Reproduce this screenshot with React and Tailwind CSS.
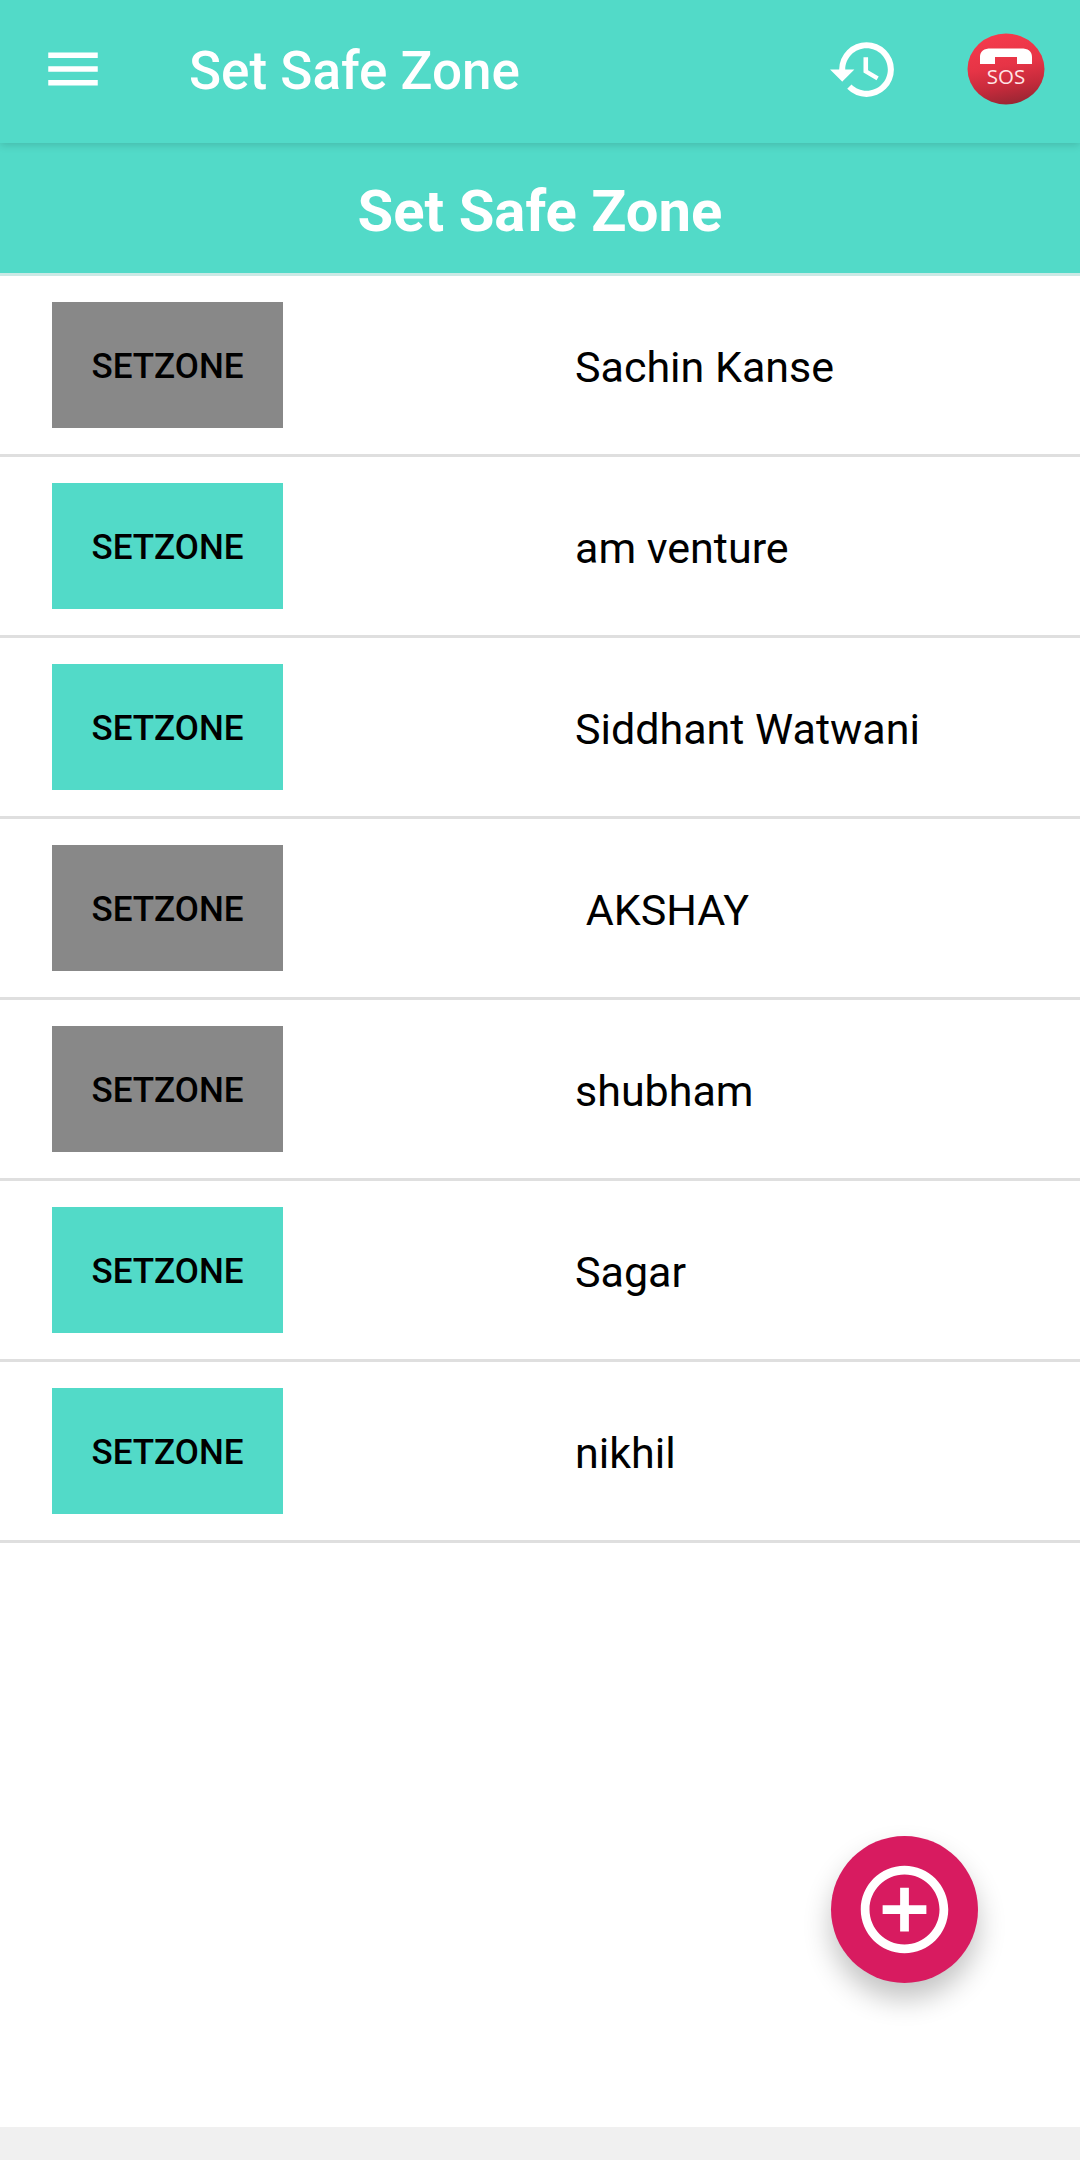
import React from 'react';
import { MdMenu, MdHistory, MdAddCircleOutline } from 'react-icons/md';

const contacts = [
  { id: 1, name: 'Sachin Kanse', active: false },
  { id: 2, name: 'am venture', active: true },
  { id: 3, name: 'Siddhant Watwani', active: true },
  { id: 4, name: ' AKSHAY', active: false },
  { id: 5, name: 'shubham', active: false },
  { id: 6, name: 'Sagar', active: true },
  { id: 7, name: 'nikhil', active: true }
];

const SosIcon = () => (
  <svg width="78" height="72" viewBox="0 0 78 72">
    <defs>
      <linearGradient id="sosFill" x1="0.4" y1="0" x2="0.6" y2="1">
        <stop offset="0" stopColor="#f53a4c" />
        <stop offset="0.45" stopColor="#e63446" />
        <stop offset="0.75" stopColor="#c42a3b" />
        <stop offset="1" stopColor="#982633" />
      </linearGradient>
    </defs>
    <ellipse cx="39" cy="36" rx="38.5" ry="35.5" fill="url(#sosFill)" />
    <path
      d="M13 31V24C13 18 17 15.5 24 15.5H54C61 15.5 65 18 65 24V31H50V24H28V31Z"
      fill="#fff"
    />
    <text
      x="39"
      y="51"
      textAnchor="middle"
      fontSize="20.5"
      fontFamily="'Open Sans', sans-serif"
      fill="#ffe4e6"
    >
      SOS
    </text>
  </svg>
);

const ContactRow = ({ contact }) => (
  <li className="flex h-[181px] items-center border-b-3 border-[#dfdfdf] pl-[52px]">
    <button
      className={`h-[126px] w-[231px] pt-[4px] text-[35px] font-medium text-black ${
        contact.active ? 'bg-[#52dac8]' : 'bg-[#888888]'
      }`}
    >
      SETZONE
    </button>
    <span className="ml-[292px] pt-[4px] text-[43px] whitespace-pre text-black">{contact.name}</span>
  </li>
);

const App = () => {
  return (
    <div className="relative flex h-[2160px] w-[1080px] flex-col bg-white font-[Roboto,sans-serif]">
      {/* App bar */}
      <header className="z-10 flex h-[143px] shrink-0 items-center bg-[#52dac8] pr-[35px] pb-[5px] pl-[40px] text-white shadow-[0_2px_8px_rgba(0,0,0,0.15)]">
        <button>
          <MdMenu className="size-[66px]" />
        </button>
        <h1 className="ml-[83px] pt-[6px] text-[53px] font-medium">Set Safe Zone</h1>
        <div className="ml-auto flex items-center gap-[67px]">
          <button>
            <MdHistory className="size-[73px]" />
          </button>
          <button>
            <SosIcon />
          </button>
        </div>
      </header>

      {/* Page heading */}
      <div className="flex h-[133px] shrink-0 items-center justify-center border-b-3 border-[#cbe9e5] bg-[#52dac8]">
        <h2 className="pt-[6px] text-[58px] font-bold text-white">Set Safe Zone</h2>
      </div>

      {/* Contacts */}
      <ul className="flex-1">
        {contacts.map((contact) => (
          <ContactRow key={contact.id} contact={contact} />
        ))}
      </ul>

      <button className="absolute top-[1836px] left-[831px] flex size-[147px] items-center justify-center rounded-full bg-[#d81b60] text-white shadow-[0_16px_28px_rgba(0,0,0,0.24)]">
        <MdAddCircleOutline className="size-[105px]" />
      </button>

      {/* Navigation bar */}
      <div className="h-[33px] shrink-0 bg-[#f0f0f0]" />
    </div>
  );
};

export default App;
